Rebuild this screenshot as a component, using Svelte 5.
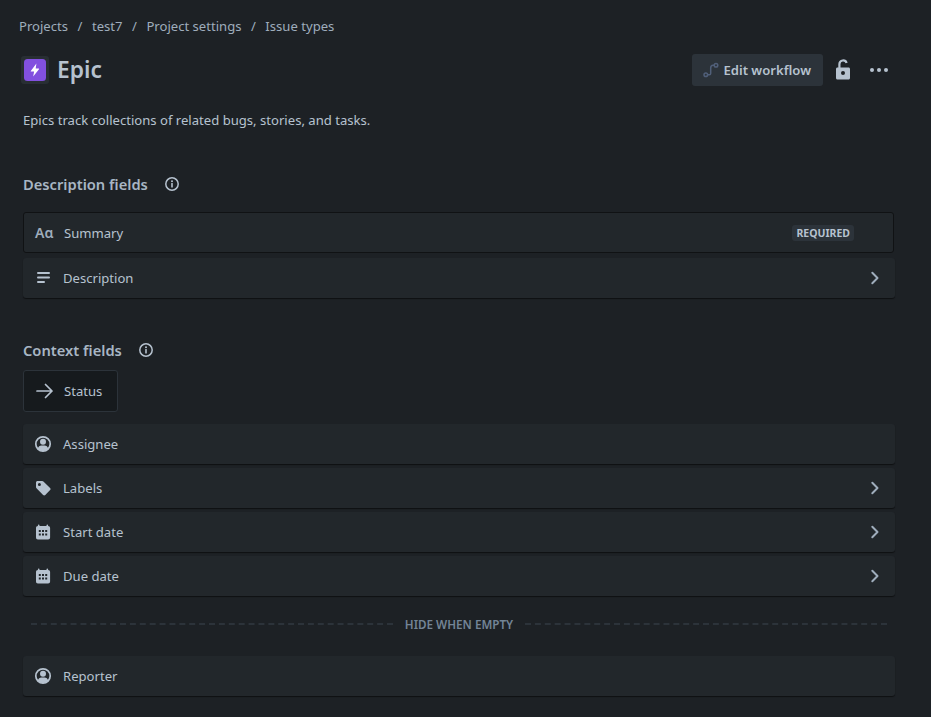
<script>
	const crumbs = ['Projects', 'test7', 'Project settings', 'Issue types'];
	const contextFields = [
		{ label: 'Assignee', icon: 'person' },
		{ label: 'Labels', icon: 'label', chevron: true },
		{ label: 'Start date', icon: 'calendar', chevron: true },
		{ label: 'Due date', icon: 'calendar', chevron: true }
	];
</script>

{#snippet info()}
	<svg class="info" width="16" height="16" viewBox="0 0 16 16" fill="none">
		<circle cx="8" cy="8" r="6.200" stroke="currentColor" stroke-width="1.500" />
		<rect x="7.200" y="7" width="1.600" height="4.400" rx="0.500" fill="currentColor" />
		<circle cx="8" cy="5.200" r="1" fill="currentColor" />
	</svg>
{/snippet}

{#snippet chevron()}
	<svg class="chevron" width="16" height="16" viewBox="0 0 16 16" fill="none">
		<path d="M5.300 2.800 10.500 8l-5.200 5.200" stroke="currentColor" stroke-width="2" stroke-linecap="round" stroke-linejoin="round" />
	</svg>
{/snippet}

{#snippet fieldIcon(name)}
	<svg class="ficon" width="20" height="20" viewBox="0 0 20 20" fill="none">
		{#if name === 'person'}
			<circle cx="10" cy="10" r="7.200" stroke="currentColor" stroke-width="1.700" />
			<circle cx="10" cy="7.800" r="3" fill="currentColor" />
			<path d="M4.600 14.800c.6-2.200 2.200-3.400 3.800-3.400h3.200c1.600 0 3.200 1.200 3.800 3.400a7.200 7.200 0 0 1-10.800 0Z" fill="currentColor" />
		{:else if name === 'label'}
			<path fill-rule="evenodd" d="M3 4.600C3 3.700 3.700 3 4.600 3h4.600c.5 0 .9.200 1.200.5l6.700 6.400c.6.600.6 1.600 0 2.200l-4.800 5c-.6.600-1.600.600-2.200 0L3.500 10.300c-.3-.3-.5-.7-.5-1.200V4.600Zm3.400 3.300a1.500 1.500 0 1 0 0-3 1.500 1.500 0 0 0 0 3Z" fill="currentColor" />
		{:else if name === 'calendar'}
			<path fill-rule="evenodd" d="M5.700 2.500c.5 0 .8.300.8.800V4h7v-.700c0-1 1.600-1 1.600 0V4c1.200 0 2 .800 2 2v9.500c0 1.200-.8 2-2 2H4.900c-1.200 0-1.900-.8-1.900-2V6c0-1.200.7-2 1.900-2v-.7c0-.5.300-.8.800-.8ZM5.800 8v1.900h2V8h-2Zm3.200 0v1.900h2V8H9Zm3.200 0v1.900h2V8h-2ZM5.800 11.500v1.900h2v-1.900h-2Zm3.200 0v1.900h2v-1.900H9Zm3.200 0v1.900h2v-1.900h-2Z" fill="currentColor" />
		{/if}
	</svg>
{/snippet}

<main class="page">
	<nav class="crumbs">
		{#each crumbs as crumb, i}
			{#if i > 0}<span>/</span>{/if}
			<span>{crumb}</span>
		{/each}
	</nav>

	<header class="head">
		<div class="title">
			<span class="type-icon">
				<svg width="22" height="22" viewBox="0 0 22 22">
					<rect width="22" height="22" rx="3.500" fill="#8250df" />
					<path d="M12.400 4.600 6.800 12a.4.400 0 0 0 .3.600h3l-.9 5 5.800-7.400a.4.400 0 0 0-.3-.6h-3l.7-5Z" fill="#fff" />
				</svg>
			</span>
			<h1>Epic</h1>
		</div>
		<div class="actions">
			<button class="workflow">
				<svg width="16" height="16" viewBox="0 0 16 16" fill="none" stroke="#505f79" stroke-width="1.500">
					<circle cx="2.800" cy="12.800" r="1.800" />
					<circle cx="13" cy="3.200" r="1.800" />
					<path d="M4.800 12.800h1.500c1 0 1.400-.5 1.400-1.400V6c0-1.600.8-2.800 2.300-2.800h1" />
				</svg>
				Edit workflow
			</button>
			<svg class="lock" width="20" height="24" viewBox="0 0 20 24" fill="none">
				<path d="M6.400 10V6a3.700 3.700 0 0 1 7.200-1" stroke="#b6c2cf" stroke-width="2.200" />
				<path fill-rule="evenodd" d="M4.500 9.500h11c.9 0 1.500.6 1.500 1.500v9c0 .9-.6 1.500-1.500 1.500h-11C3.600 21.500 3 20.900 3 20v-9c0-.9.600-1.500 1.500-1.500Zm5.500 3.500a2 2 0 1 0 0 4 2 2 0 0 0 0-4Z" fill="#b6c2cf" />
			</svg>
			<span class="dots"><i></i><i></i><i></i></span>
		</div>
	</header>

	<p class="lead">Epics track collections of related bugs, stories, and tasks.</p>

	<section class="group first">
		<h2>Description fields {@render info()}</h2>
		<div class="row outlined">
			<span class="aa">Aɑ</span>
			<span class="name">Summary</span>
			<span class="required">REQUIRED</span>
		</div>
		<div class="row">
			<svg class="ficon" width="20" height="20" viewBox="0 0 20 20" fill="currentColor">
				<rect x="4" y="4" width="13" height="2" rx="1" />
				<rect x="4" y="8.500" width="13" height="2" rx="1" />
				<rect x="4" y="13" width="8" height="2" rx="1" />
			</svg>
			<span class="name">Description</span>
			{@render chevron()}
		</div>
	</section>

	<section class="group second">
		<h2>Context fields {@render info()}</h2>
		<div class="status">
			<svg width="20" height="20" viewBox="0 0 20 20" fill="none" stroke="currentColor" stroke-width="1.700" stroke-linecap="round" stroke-linejoin="round">
				<path d="M2 10h15M10.500 3.500 17 10l-6.500 6.500" />
			</svg>
			<span>Status</span>
		</div>
		<div class="list">
			{#each contextFields as field}
				<div class="row">
					{@render fieldIcon(field.icon)}
					<span class="name">{field.label}</span>
					{#if field.chevron}{@render chevron()}{/if}
				</div>
			{/each}
		</div>
		<div class="divider"><span>HIDE WHEN EMPTY</span></div>
		<div class="row">
			{@render fieldIcon('person')}
			<span class="name">Reporter</span>
		</div>
	</section>
</main>

<style>
	:global(body) {
		background: #1d2125;
		color: #b6c2cf;
		font-family: 'Noto Sans', 'Open Sans', sans-serif;
		font-size: 13.100px;
	}

	.page {
		height: 717px;
		box-sizing: border-box;
		padding: 16px 36px 0 23px;
		overflow: hidden;
	}

	.crumbs {
		display: flex;
		gap: 9.500px;
		margin-left: -4px;
		height: 20px;
		line-height: 20px;
		color: #9fadbc;
	}

	.head {
		display: flex;
		justify-content: space-between;
		align-items: center;
		margin-top: 18px;
		height: 32px;
	}

	.title {
		display: flex;
		align-items: center;
		gap: 8px;
		margin-left: -2px;
	}

	.type-icon {
		display: flex;
		width: 28px;
		height: 28px;
		align-items: center;
		justify-content: center;
		background: #282e33;
		border-radius: 3px;
	}

	h1 {
		margin: 0;
		font-size: 22.800px;
		font-weight: 600;
		line-height: 28px;
	}

	.actions {
		display: flex;
		align-items: center;
		margin-right: 7px;
	}

	.workflow {
		display: flex;
		align-items: center;
		gap: 4px;
		height: 32px;
		padding: 0 12px 0 11px;
		border: none;
		border-radius: 3px;
		background: #2c333a;
		color: #b6c2cf;
		font: 600 13.100px 'Noto Sans', sans-serif;
	}

	.lock {
		margin-left: 10px;
	}

	.dots {
		display: flex;
		gap: 3px;
		margin-left: 17px;
	}

	.dots i {
		width: 4px;
		height: 4px;
		border-radius: 50%;
		background: #b6c2cf;
	}

	.lead {
		margin: 24px 0 0;
		line-height: 20px;
	}

	h2 {
		display: flex;
		align-items: center;
		gap: 16px;
		margin: 0 0 18px;
		height: 20px;
		font-size: 14.700px;
		font-weight: 600;
		color: #a8b6c4;
	}

	.info {
		color: #b6c2cf;
	}

	.first {
		margin-top: 44px;
	}

	.second {
		margin-top: 42px;
	}

	.second h2 {
		margin-bottom: 10px;
	}

	.row {
		display: flex;
		align-items: center;
		height: 40px;
		box-sizing: border-box;
		padding: 0 10px;
		gap: 10px;
		margin-top: 4px;
		border-radius: 3px;
		background: #22272b;
		box-shadow: 0 1px 1px #0304048c;
	}

	.row.outlined {
		margin: 0 1px 5px 0;
		height: 41px;
		padding: 0 11px;
		gap: 9px;
		border: 1px solid #101214;
		box-shadow: none;
	}

	.name {
		flex: 1;
	}

	.ficon {
		color: #b6c2cf;
		flex: none;
	}

	.aa {
		width: 20px;
		font-weight: 600;
		font-size: 14px;
		color: #9fadbc;
	}

	.required {
		margin-right: 28px;
		padding: 0 4px;
		height: 16px;
		line-height: 16px;
		border-radius: 3px;
		background: #2c333a;
		font-size: 10.500px;
		font-weight: 700;
	}

	.chevron {
		color: #9fadbc;
		margin-right: 2px;
	}

	.status {
		display: flex;
		align-items: center;
		gap: 9px;
		width: 95px;
		height: 42px;
		box-sizing: border-box;
		padding: 0 11px;
		border: 1px solid #2c333a;
		border-radius: 3px;
		background: #161a1d;
	}

	.list {
		margin-top: 12px;
	}

	.divider {
		display: flex;
		align-items: center;
		gap: 12px;
		height: 16px;
		margin: 20px 8px 24px;
		font-size: 11.700px;
		font-weight: 600;
		color: #738496;
	}

	.divider::before,
	.divider::after {
		content: '';
		flex: 1;
		border-top: 2px dashed #2c333a;
	}
</style>
